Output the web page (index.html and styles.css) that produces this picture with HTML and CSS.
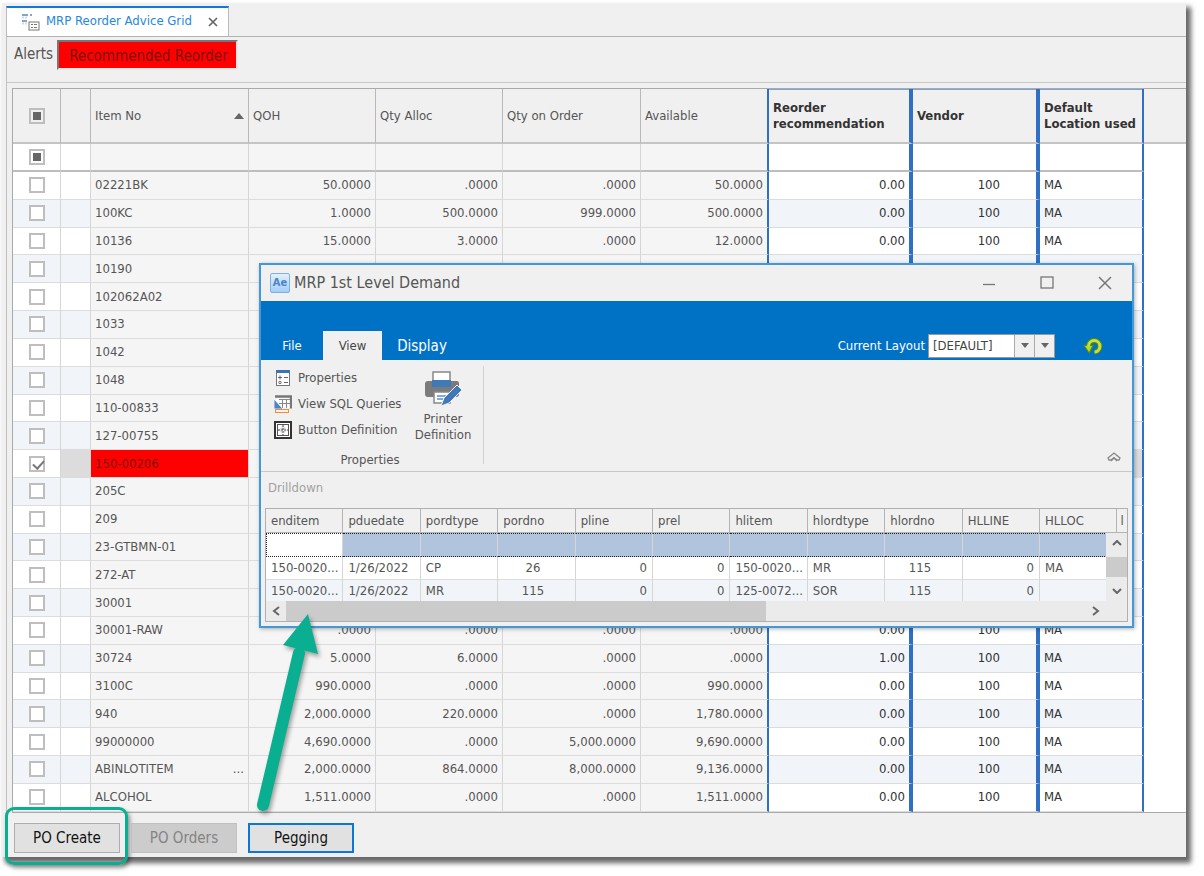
FILE: index.html
```html
<!DOCTYPE html>
<html lang="en">
<head>
<meta charset="utf-8">
<title>MRP Reorder Advice Grid</title>
<link rel="stylesheet" href="styles.css">
</head>
<body>
<main class="app">
  <nav class="tabs">
    <div class="tab">
      <svg class="tab-icon" width="18" height="17" viewBox="0 0 18 17" aria-hidden="true">
        <path d="M0 1h6M8 1h2M0 7h5" stroke="#5b87bd" stroke-width="1.500"/>
        <path d="M1 2.500v2M4 2.500v2M1 8.500v2M4 8.500v2" stroke="#9ab2cf"/>
        <rect x="7" y="8" width="10" height="8" fill="#fff" stroke="#777"/>
        <path d="M9 10.500h2M12 10.500h3M9 13.500h2M12 13.500h3" stroke="#777"/>
      </svg>
      <a class="tab-label" href="#grid">MRP Reorder Advice Grid</a>
      <button class="tab-close" type="button" aria-label="Close tab">
        <svg width="10" height="10" viewBox="0 0 10 10"><path d="M1 1l8 8M9 1l-8 8" stroke="#666" stroke-width="1.700"/></svg>
      </button>
    </div>
  </nav>
  <div class="panel">
    <header class="alerts">
      <span class="alerts-label">Alerts</span>
      <span class="alert-chip">Recommended Reorder</span>
    </header>
    <div class="grid-area" id="grid">
      <table class="grid">
        <colgroup>
          <col class="c-check"><col class="c-mark"><col class="c-item"><col class="c-qty"><col class="c-qty"><col class="c-order"><col class="c-avail"><col class="c-reorder"><col class="c-vendor"><col class="c-loc"><col>
        </colgroup>
        <thead>
          <tr class="head">
            <th class="center"><input type="checkbox" class="tick mixed" aria-label="Select all"></th>
            <th></th>
            <th><span class="sorted">Item No <svg width="10" height="6" viewBox="0 0 10 6" aria-hidden="true"><path d="M0 6l5-6 5 6z" fill="#666"/></svg></span></th>
            <th>QOH</th><th>Qty Alloc</th><th>Qty on Order</th><th class="edge">Available</th>
            <th class="key wide-edge">Reorder recommendation</th><th class="key wide-edge">Vendor</th><th class="key edge">Default Location used</th><th class="rest"></th>
          </tr>
          <tr class="filter">
            <td class="center"><input type="checkbox" class="tick mixed" aria-label="Filter selected"></td>
            <td></td><td class="ro"></td><td class="ro"></td><td class="ro"></td><td class="ro"></td><td class="ro edge"></td>
            <td class="wide-edge"></td><td class="wide-edge"></td><td class="edge"></td><td class="rest"></td>
          </tr>
        </thead>
        <tbody id="rows"></tbody>
      </table>
    </div>
    <footer class="actions">
      <button class="btn marked" type="button">PO Create</button>
      <button class="btn" type="button" disabled>PO Orders</button>
      <button class="btn focus" type="button">Pegging</button>
    </footer>
  </div>
</main>

<section class="dialog" role="dialog" aria-label="MRP 1st Level Demand">
  <header class="titlebar">
    <span class="app-icon">Ae</span>
    <h1 class="title">MRP 1st Level Demand</h1>
    <div class="win-buttons">
      <button type="button" aria-label="Minimize"><svg width="14" height="14" viewBox="0 0 14 14"><path d="M1 8.500h12" stroke="#777" stroke-width="1.300"/></svg></button>
      <button type="button" aria-label="Maximize"><svg width="14" height="14" viewBox="0 0 14 14"><rect x="1" y="1" width="12" height="11" fill="none" stroke="#777" stroke-width="1.300"/></svg></button>
      <button type="button" aria-label="Close"><svg width="14" height="14" viewBox="0 0 14 14"><path d="M1 1l12 12M13 1l-12 12" stroke="#777" stroke-width="1.500"/></svg></button>
    </div>
  </header>
  <div class="ribbon-tabs">
    <button class="rtab file" type="button">File</button>
    <button class="rtab active" type="button">View</button>
    <button class="rtab display" type="button">Display</button>
    <div class="layout-picker">
      <label for="layout">Current Layout</label>
      <div class="combo">
        <select id="layout"><option>[DEFAULT]</option></select>
        <button type="button" aria-label="Open layouts"><svg width="8" height="5" viewBox="0 0 8 5"><path d="M0 0h8l-4 5z" fill="#666"/></svg></button>
        <button type="button" aria-label="Layout options"><svg width="8" height="5" viewBox="0 0 8 5"><path d="M0 0h8l-4 5z" fill="#666"/></svg></button>
      </div>
      <button class="refresh" type="button" aria-label="Refresh">
        <svg width="20" height="18" viewBox="0 0 20 18"><path d="M5.500 9a5.700 5.700 0 1 1 6 6" fill="none" stroke="#5c8a12" stroke-width="5"/><path d="M0 8h11l-4.500 9z" fill="#5c8a12"/><path d="M5.500 9a5.700 5.700 0 1 1 6 6" fill="none" stroke="#c4e23c" stroke-width="3"/><path d="M2 9h7l-3 6z" fill="#b5da30"/></svg>
      </button>
    </div>
  </div>
  <div class="ribbon">
    <div class="group">
      <div class="group-body">
        <div class="commands">
          <button type="button"><svg width="18" height="18" viewBox="0 0 18 18"><rect x="2.500" y="1.500" width="13" height="15" fill="#fff" stroke="#777"/><path d="M2 2.500h14" stroke="#3a74b5" stroke-width="3"/><path d="M4 8.500h4M6 6.500v4M10 8.500h4M10 13.500h4" stroke="#666"/><circle cx="6" cy="13.500" r="1.200" fill="none" stroke="#666"/></svg>Properties</button>
          <button type="button"><svg width="18" height="18" viewBox="0 0 18 18"><path d="M1 1.500h16v12" fill="none" stroke="#777" stroke-width="2.500"/><rect x="2" y="3.500" width="13.500" height="9.500" fill="#fff"/><path d="M5 4.500h11M5 8.500h11M8.500 4v9M12.500 4v9" stroke="#888"/><path d="M0 4v10h9z" fill="#4a84c6" stroke="#fff" stroke-width=".8"/><rect x="1.500" y="14.500" width="13" height="3" fill="#fff1e4" stroke="#ef8c40"/></svg>View SQL Queries</button>
          <button type="button"><svg width="18" height="18" viewBox="0 0 18 18"><rect x="1" y="1" width="16" height="16" fill="#fff" stroke="#333" stroke-width="2"/><rect x="3.500" y="3.500" width="11" height="11" fill="#fff" stroke="#555"/><path d="M9 4v10M4 9h10" stroke="#333" stroke-dasharray="2 1"/><path d="M7 7h4v4H7z" fill="none" stroke="#aaa" stroke-width=".6"/></svg>Button Definition</button>
        </div>
        <button class="big" type="button">
          <svg width="38" height="36" viewBox="0 0 38 36"><rect x="9" y="1" width="17" height="14" fill="#fff" stroke="#888" stroke-width="1.500"/><path d="M4 10h4v4h19v-4h6q2 0 2 3v10q0 3-3 3H4q-3 0-3-3V13q0-3 3-3z" fill="#7b7b7b"/><rect x="8" y="9" width="19" height="7" fill="#3f79b9"/><rect x="10" y="21" width="16" height="11" fill="#fff" stroke="#888" stroke-width="1.500"/><path d="M13 25h9M13 28h6" stroke="#5b8fcb" stroke-width="1.500"/><path d="M17 35l3-8 13-13 5 5-13 13z" fill="#3f79b9" stroke="#efefef"/></svg>
          Printer Definition</button>
      </div>
      <div class="group-name">Properties</div>
    </div>
    <button class="collapse" type="button" aria-label="Collapse ribbon"><svg width="14" height="11" viewBox="0 0 14 11"><path d="M1 6l6-5 6 5-1 2H10L7 5.500 4 8H2zM4 9l3-3 3 3" fill="none" stroke="#888" stroke-width="1.300"/></svg></button>
  </div>
  <div class="drill">
    <h2 class="drill-title">Drilldown</h2>
    <div class="sub">
      <div class="sub-view">
        <table class="subgrid">
          <colgroup><col span="11"><col></colgroup>
          <thead>
            <tr><th>enditem</th><th>pduedate</th><th>pordtype</th><th>pordno</th><th>pline</th><th>prel</th><th>hlitem</th><th>hlordtype</th><th>hlordno</th><th>HLLINE</th><th>HLLOC</th><th class="next">l</th></tr>
          </thead>
          <tbody>
            <tr class="sub-filter"><td class="editing"></td><td></td><td></td><td></td><td></td><td></td><td></td><td></td><td></td><td></td><td></td><td></td></tr>
            <tr><td>150-0020...</td><td>1/26/2022</td><td>CP</td><td class="mid">26</td><td class="num">0</td><td class="num">0</td><td>150-0020...</td><td>MR</td><td class="mid">115</td><td class="num">0</td><td>MA</td><td></td></tr>
            <tr class="alt"><td>150-0020...</td><td>1/26/2022</td><td>MR</td><td class="mid">115</td><td class="num">0</td><td class="num">0</td><td>125-0072...</td><td>SOR</td><td class="mid">115</td><td class="num">0</td><td></td><td></td></tr>
          </tbody>
        </table>
        <div class="vscroll">
          <svg width="10" height="6" viewBox="0 0 10 6"><path d="M1 5l4-4 4 4" fill="none" stroke="#666" stroke-width="2"/></svg>
          <span class="vthumb"></span>
          <svg width="10" height="6" viewBox="0 0 10 6"><path d="M1 1l4 4 4-4" fill="none" stroke="#666" stroke-width="2"/></svg>
        </div>
      </div>
      <div class="hscroll">
        <svg width="20" height="10" viewBox="0 0 20 10"><path d="M13 1L8 5l5 4" fill="none" stroke="#666" stroke-width="2"/></svg>
        <span class="hthumb"></span>
        <svg width="20" height="10" viewBox="0 0 20 10"><path d="M7 1l5 4-5 4" fill="none" stroke="#666" stroke-width="2"/></svg>
      </div>
    </div>
  </div>
</section>

<svg class="arrow" width="80" height="220" viewBox="0 0 80 220" aria-hidden="true">
  <path d="M23 205L59 53" stroke="#0aae90" stroke-width="12" stroke-linecap="round"/>
  <path d="M68 14L78 54L43 45z" fill="#0aae90"/>
</svg>
<script src="app.js"></script>
</body>
</html>
```
FILE: styles.css
```css
* { box-sizing: border-box; }
body {
  margin: 0;
  height: 100vh;
  padding: 3px 18px 19px 2px;
  background: #fff;
  color: #555;
  font: 13px/16px "DejaVu Sans Condensed", "Noto Sans", sans-serif;
  overflow: hidden;
}
button, select, input { font: inherit; color: inherit; margin: 0; }
button { border: 0; padding: 0; background: none; display: flex; align-items: center; justify-content: center; }
h1, h2 { margin: 0; font-weight: normal; }
svg { display: block; flex: none; }

.app {
  height: 100%;
  display: flex;
  flex-direction: column;
  background: #f0f0f0;
  box-shadow: 4px 5px 5px 1px rgba(0, 0, 0, .6);
}
.tabs { display: flex; padding: 3px 0 0 4px; }
.tab {
  display: flex;
  align-items: center;
  width: 223px;
  height: 30px;
  padding: 0 10px 0 15px;
  background: #fff;
  border: 1px solid #bbb;
  border-top: 2px solid #0f7ad8;
  border-bottom: 0;
}
.tab-label { color: #2487e0; text-decoration: none; margin: 0 auto 2px 6px; white-space: nowrap; }

.panel {
  flex: 1;
  min-height: 0;
  display: flex;
  flex-direction: column;
  margin-left: 4px;
  border-left: 1px solid #c0c0c0;
  border-top: 1px solid #b4b4b4;
}
.alerts {
  display: flex;
  gap: 4px;
  height: 46px;
  padding: 3px 0 0 7px;
  border-bottom: 1px solid #c8c8c8;
}
.alerts-label { font-size: 15px; line-height: 28px; }
.alert-chip {
  height: 30px;
  padding: 0 8px 0 10px;
  background: #f00;
  border: 2px solid #e8e8e8;
  border-top-color: #777;
  border-left-color: #777;
  color: #7a140c;
  font-size: 15px;
  line-height: 29px;
}

.grid-area { flex: 1; min-height: 0; margin: 5px 0 0 5px; border: 1px solid #aaa; border-right: 0; background: #fff; }
.grid { width: 100%; height: 100%; table-layout: fixed; border-collapse: separate; border-spacing: 0; }
.c-check { width: 48px; }
.c-mark { width: 30px; }
.c-item { width: 158px; }
.c-qty { width: 127px; }
.c-order { width: 138px; }
.c-avail { width: 128px; }
.c-reorder { width: 144px; }
.c-vendor { width: 127px; }
.c-loc { width: 104px; }
.grid th, .grid td {
  padding: 0 4px;
  border-right: 1px solid #d6d6d6;
  border-bottom: 1px solid #dcdcdc;
  overflow: hidden;
}
.head { height: 55px; }
.filter { height: 28px; }
.grid th { background: #f0f0f0; border-right-color: #b8b8b8; border-bottom: 2px solid #c4c4c4; text-align: left; font-weight: normal; }
.grid .key { color: #333; font-weight: bold; box-shadow: inset 0 1px #7ba3dc; padding-right: 0; }
.filter td { border-bottom: 2px solid #bdbdbd; }
.grid .edge { border-right: 2px solid #2f6fc4; }
.grid .wide-edge { border-right: 4px solid #2f6fc4; }
.grid .rest { border-right: 0; }
.grid td.rest { border-bottom: 0; background: #fff; }
.grid .center { text-align: center; padding: 0; }
.sorted { display: flex; align-items: center; justify-content: space-between; }
.grid td.num { text-align: right; }
.grid td.vendor { text-align: right; padding-right: 36px; }
.grid td.own { color: #333; }
.alt td { background: #f1f5fa; }
.grid td.ro { background: #f5f5f5; }
.picked td { background: #dcdcdc; }
.grid .picked td.center { background: #fff; }
.grid .picked td.item { background: #f00; color: #7a140c; }
.more { float: right; }

.tick {
  appearance: none;
  display: block;
  width: 16px;
  height: 16px;
  margin: 0 auto;
  border: 2px solid #bebebe;
  background: #fff;
}
.mixed { background: #666 content-box; padding: 2px; }
.tick:checked::after {
  content: "";
  display: block;
  width: 5px;
  height: 9px;
  margin: 0 0 0 4px;
  border: solid #777;
  border-width: 0 2px 2px 0;
  transform: rotate(42deg);
}

.actions { display: flex; gap: 11px; height: 44px; padding: 10px 0 0 7px; }
.btn {
  width: 106px;
  height: 30px;
  background: #e1e1e1;
  border: 1px solid #adadad;
  color: #111;
  font-size: 15px;
  position: relative;
}
.btn:disabled { background: #ccc; border-color: #c0c0c0; color: #838383; }
.btn.focus { border: 2px solid #0a78d7; }
.marked::after {
  content: "";
  position: absolute;
  inset: -17px -9px -13px -10px;
  border: 3px solid #0aae90;
  border-radius: 9px;
  box-shadow: 2px 3px 4px rgba(0, 0, 0, .4);
}

.dialog {
  position: absolute;
  top: 263px;
  left: 259px;
  right: 70px;
  border: 2px solid #4399d8;
  background: #f0f0f0;
  box-shadow: 1px 1px 4px rgba(0, 0, 0, .3);
}
.titlebar { display: flex; align-items: center; height: 36px; padding: 0 20px 0 9px; }
.app-icon {
  width: 20px;
  height: 20px;
  border: 1px solid #7fb0e4;
  border-radius: 2px;
  background: linear-gradient(#e3f0fd, #a3cdf7);
  color: #4c84c4;
  font-size: 11px;
  font-weight: bold;
  line-height: 17px;
  text-align: center;
}
.title { font-size: 16px; line-height: 20px; margin: 0 auto 0 4px; }
.win-buttons { display: flex; gap: 44px; }

.ribbon-tabs { display: flex; align-items: flex-end; height: 59px; background: #0072c6; color: #fff; }
.rtab { height: 29px; }
.file { width: 62px; }
.active { width: 59px; background: #f0f0f0; color: #444; }
.display { width: 80px; font-size: 15px; }
.layout-picker { display: flex; align-items: center; height: 29px; margin: 0 29px 0 auto; gap: 3px; }
.combo { display: flex; width: 127px; height: 24px; border: 1px solid #999; background: #fff; color: #444; }
.combo select { appearance: none; flex: 1; min-width: 0; border: 0; padding: 0 4px; background: #fff; }
.combo button { width: 20px; background: #f0f0f0; border-left: 1px solid #aaa; }
.refresh { margin-left: 25px; }

.ribbon { display: flex; justify-content: space-between; align-items: flex-end; height: 112px; padding: 7px 11px 7px 8px; border-bottom: 1px solid #c8c8c8; }
.group { height: 98px; width: 215px; border-right: 1px solid #d0d0d0; }
.group-body { display: flex; justify-content: space-between; padding: 3px 10px 0 0; }
.commands { display: flex; flex-direction: column; align-items: flex-start; gap: 8px; }
.commands button { gap: 6px; height: 18px; padding-left: 5px; white-space: nowrap; }
.group-name { text-align: center; margin: 8px 12px 0 0; line-height: 18px; }
.big { flex-direction: column; width: 60px; gap: 4px; padding-top: 2px; }
.collapse { margin-bottom: 1px; }

.drill { padding: 6px 4px 4px; }
.drill-title { color: #a2a2a2; font-size: 13px; line-height: 20px; padding-left: 3px; }
.sub { margin-top: 10px; border: 1px solid #b0b0b0; }
.sub-view { position: relative; overflow: hidden; height: 92px; background: #fff; }
.subgrid { width: 929px; table-layout: fixed; border-collapse: separate; border-spacing: 0; }
.subgrid th { height: 24px; padding: 0 5px; background: #f0f0f0; border-right: 1px solid #b4b4b4; border-bottom: 1px solid #b4b4b4; text-align: left; font-weight: normal; }
.subgrid th.next { padding-left: 3px; }
.subgrid td { height: 23px; padding: 0 5px; border-right: 1px solid #d6d6d6; border-bottom: 1px solid #dcdcdc; white-space: nowrap; }
.subgrid .sub-filter td { height: 24px; background: #b0c4de; border-top: 1px dotted #222; border-bottom: 1px dotted #222; }
.subgrid .sub-filter .editing { background: #fff; border-left: 1px dotted #222; }
.subgrid .num { text-align: right; }
.subgrid .mid { text-align: center; padding-right: 12px; }
.vscroll {
  position: absolute;
  top: 24px;
  right: 0;
  bottom: 0;
  width: 21px;
  display: flex;
  flex-direction: column;
  align-items: center;
  justify-content: space-between;
  padding: 7px 0;
  background: #ebebeb;
}
.vthumb { align-self: stretch; height: 20px; background: #cbcbcb; }
.hscroll { display: flex; align-items: center; height: 20px; padding-right: 21px; background: #ebebeb; }
.hthumb { width: 480px; height: 20px; margin-right: auto; background: #cbcbcb; }

.arrow { position: absolute; top: 600px; left: 240px; filter: drop-shadow(2px 3px 2px rgba(0, 0, 0, .35)); }
```
FILE: app.js
```js
const rows = [
  ["02221BK", "50.0000", ".0000", ".0000", "50.0000", "0.00", "100", "MA"],
  ["100KC", "1.0000", "500.0000", "999.0000", "500.0000", "0.00", "100", "MA"],
  ["10136", "15.0000", "3.0000", ".0000", "12.0000", "0.00", "100", "MA"],
  ["10190"], ["102062A02"], ["1033"], ["1042"], ["1048"], ["110-00833"], ["127-00755"],
  ["150-00206"], ["205C"], ["209"], ["23-GTBMN-01"], ["272-AT"], ["30001"],
  ["30001-RAW", ".0000", ".0000", ".0000", ".0000", "0.00", "100", "MA"],
  ["30724", "5.0000", "6.0000", ".0000", ".0000", "1.00", "100", "MA"],
  ["3100C", "990.0000", ".0000", ".0000", "990.0000", "0.00", "100", "MA"],
  ["940", "2,000.0000", "220.0000", ".0000", "1,780.0000", "0.00", "100", "MA"],
  ["99000000", "4,690.0000", ".0000", "5,000.0000", "9,690.0000", "0.00", "100", "MA"],
  ["ABINLOTITEM", "2,000.0000", "864.0000", "8,000.0000", "9,136.0000", "0.00", "100", "MA"],
  ["ALCOHOL", "1,511.0000", ".0000", ".0000", "1,511.0000", "0.00", "100", "MA"]
];
const selected = "150-00206";
const truncated = "ABINLOTITEM";
const classes = ["ro item", "ro num", "ro num", "ro num", "ro num edge", "own num wide-edge", "own vendor wide-edge", "own edge"];

document.getElementById("rows").innerHTML = rows.map((row, i) => {
  const picked = row[0] === selected;
  const cells = classes.map((name, c) => {
    const more = c === 0 && row[0] === truncated ? '<span class="more">...</span>' : "";
    return `<td class="${name}">${more}${row[c] || ""}</td>`;
  }).join("");
  return `<tr class="${picked ? "picked" : i % 2 ? "alt" : ""}">
    <td class="center"><input type="checkbox" class="tick" aria-label="Select ${row[0]}"${picked ? " checked" : ""}></td>
    <td></td>${cells}<td class="rest"></td></tr>`;
}).join("");
```
